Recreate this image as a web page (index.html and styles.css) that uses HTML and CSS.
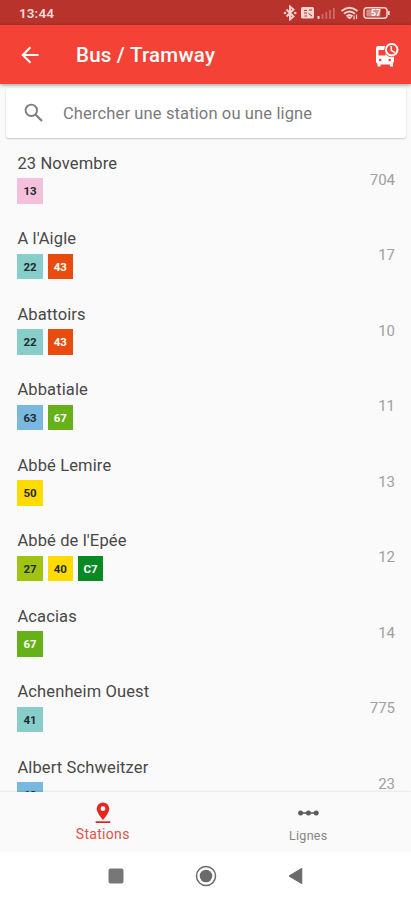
FILE: index.html
```html
<!DOCTYPE html>
<html lang="fr">
<head>
<meta charset="utf-8">
<meta name="viewport" content="width=device-width, initial-scale=1">
<title>Bus / Tramway</title>
<link rel="stylesheet" href="styles.css">
</head>
<body>
<div class="app">
  <div class="status">
    <span class="time">13:44</span>
    <svg class="status-icons" width="110" height="16" viewBox="0 0 110 16" fill="none" stroke="#f3d5d3">
      <path d="M3.500 4.500l7 7L7 14.500V1.500l3.500 3-7 7" stroke-width="1.900"/>
      <circle cx="2" cy="8" r="1.300" fill="#f3d5d3" stroke="none"/><circle cx="12.200" cy="8" r="1.300" fill="#f3d5d3" stroke="none"/>
      <rect x="18" y="2" width="13" height="11.500" rx="1.500" fill="#f3d5d3" stroke="none"/>
      <path d="M21 5.500h3M21 8h3M26 5h3M21.500 11h2.500M25.500 8.500l3.500 2.500" stroke="#b7332b" stroke-width="1"/>
      <path d="M35.500 11v3" stroke-width="2"/>
      <path d="M39.500 9v5M43.300 7v7M47 5v9M50.800 3v11" stroke="#cd7069" stroke-width="1.700"/>
      <path d="M58.500 6q8-6.500 16 0M61 8.800q5.500-4.500 11 0M63.500 11.300q3-2.500 6 0" stroke-width="2"/>
      <path d="M66.500 14l-2-2h4z" fill="#f3d5d3"/><path d="M71 10.500v4M73.500 9.500v4.500" stroke-width="1.200"/>
      <rect x="81" y="2.700" width="23" height="10.600" rx="3" stroke-width="1.500"/>
      <rect x="83.300" y="4.500" width="14" height="7" rx="1" fill="#d98c86" stroke="none"/>
      <path d="M105.800 6v4" stroke-width="1.800"/>
      <text x="88" y="11.300" class="battery">57</text>
    </svg>
  </div>
  <header class="bar">
    <svg class="back" width="18" height="18" viewBox="0 0 18 18" fill="none" stroke="#fff" stroke-width="2"><path d="M17.500 9H2M9.500 1.200L1.700 9l7.800 7.800"/></svg>
    <h1>Bus / Tramway</h1>
    <svg class="bus" width="26" height="26" viewBox="0 0 26 26">
      <path fill="#fff" d="M5 4h13v10h3v5.500l-1 1.500v3.500h-3V22.500H7.500v2H4.500V22L3 20V7q0-3 2-3z"/>
      <path fill="#f44336" d="M5.500 8h7v5.500h-7z"/>
      <circle cx="7.200" cy="18" r="1.300" fill="#f44336"/><circle cx="16.700" cy="18" r="1.300" fill="#f44336"/>
      <circle cx="18.700" cy="7.700" r="7.500" fill="#f44336"/>
      <circle cx="18.700" cy="7.700" r="5.800" fill="#f44336" stroke="#fff" stroke-width="2"/>
      <path d="M18.300 3.900v4.500l3.500 2.200" fill="none" stroke="#fff" stroke-width="1.500"/>
    </svg>
  </header>
  <div class="search">
    <svg width="20" height="20" viewBox="0 0 20 20" fill="none" stroke="#7d7d7d" stroke-width="1.900"><circle cx="7.300" cy="7.300" r="5.700"/><path d="M11.700 11.700l6.300 6.300" stroke-width="2.200"/></svg>
    <span>Chercher une station ou une ligne</span>
  </div>
  <main class="list">
    <div class="row"><div><p>23 Novembre</p><div class="tags"><b class="pink">13</b></div></div><span>704</span></div>
    <div class="row"><div><p>A l'Aigle</p><div class="tags"><b class="teal">22</b><b class="orange">43</b></div></div><span>17</span></div>
    <div class="row"><div><p>Abattoirs</p><div class="tags"><b class="teal">22</b><b class="orange">43</b></div></div><span>10</span></div>
    <div class="row"><div><p>Abbatiale</p><div class="tags"><b class="blue">63</b><b class="green">67</b></div></div><span>11</span></div>
    <div class="row"><div><p>Abbé Lemire</p><div class="tags"><b class="yellow">50</b></div></div><span>13</span></div>
    <div class="row"><div><p>Abbé de l'Epée</p><div class="tags"><b class="lime">27</b><b class="yellow">40</b><b class="dark">C7</b></div></div><span>12</span></div>
    <div class="row"><div><p>Acacias</p><div class="tags"><b class="green">67</b></div></div><span>14</span></div>
    <div class="row"><div><p>Achenheim Ouest</p><div class="tags"><b class="teal">41</b></div></div><span>775</span></div>
    <div class="row"><div><p>Albert Schweitzer</p><div class="tags"><b class="blue">63</b></div></div><span>23</span></div>
  </main>
  <nav class="tabs">
    <div class="tab active">
      <svg width="16" height="22" viewBox="0 0 16 22"><path fill="#e5281f" fill-rule="evenodd" d="M8 .5a6.300 6.300 0 0 1 6.300 6.300C14.300 11 8 18 8 18S1.700 11 1.700 6.800A6.300 6.300 0 0 1 8 .5zM8 4.300a2.400 2.400 0 1 0 0 4.800 2.400 2.400 0 0 0 0-4.800zM.7 19.300h14.600v1.700H.7z"/></svg>
      <span>Stations</span>
    </div>
    <div class="tab">
      <svg width="22" height="22" viewBox="0 0 22 22" fill="#5c5c5c"><path d="M3 10.200h16v1.600H3z"/><circle cx="3.600" cy="11" r="2.500"/><circle cx="11.400" cy="11" r="2.500"/><circle cx="19.200" cy="11" r="2.500"/></svg>
      <span>Lignes</span>
    </div>
  </nav>
  <div class="system">
    <svg width="16" height="16" viewBox="0 0 16 16"><rect x=".5" y=".5" width="15" height="15" rx="2" fill="#777"/></svg>
    <svg width="22" height="22" viewBox="0 0 22 22"><circle cx="11" cy="11" r="9.500" fill="none" stroke="#6b6b6b" stroke-width="1.500"/><circle cx="11" cy="11" r="6.300" fill="#6b6b6b"/></svg>
    <svg width="16" height="18" viewBox="0 0 16 18"><path d="M13.800 1.300v15.400L1 9z" fill="#6b6b6b" stroke="#6b6b6b" stroke-linejoin="round"/></svg>
  </div>
</div>
</body>
</html>
```
FILE: styles.css
```css
* { box-sizing: border-box; }
body { margin: 0; font-family: Roboto, "Liberation Sans", sans-serif; background: #fafafa; }
h1, p { margin: 0; }
svg { display: block; flex: none; }
.app { width: 411px; height: 900px; display: flex; flex-direction: column; overflow: hidden; }
.status { flex: none; height: 25px; background: #b7332b; display: flex; align-items: center; justify-content: space-between; padding: 0 18px 0 19px; }
.time { color: #f5dddb; font-size: 13.500px; font-weight: 600; letter-spacing: .1px; }
.battery { font-size: 8.500px; font-weight: 700; fill: #fff; stroke: none; }
.bar { flex: none; height: 59px; background: #f44336; display: flex; align-items: center; padding: 0 12px 0 21px; color: #fff; box-shadow: 0 1px 4px rgba(0,0,0,.4); z-index: 1; }
.bar h1 { flex: 1; margin-left: 37px; font-size: 20.500px; font-weight: 500; letter-spacing: .22px; line-height: 24px; padding-top: 1px; }
.search { flex: none; height: 50px; margin: 4px 5px 5px 6px; background: #fff; border-radius: 3px; box-shadow: 0 1px 2px rgba(0,0,0,.2); display: flex; align-items: center; padding-left: 18px; gap: 19px; color: #7a7a7a; font-size: 16.500px; letter-spacing: .13px; }
.list { flex: 1; min-height: 0; overflow: hidden; }
.row { height: 75.5px; display: flex; justify-content: space-between; padding: 10.8px 16px 0 17.4px; }
.row p { font-size: 16.500px; line-height: 20px; letter-spacing: .13px; color: #484848; white-space: nowrap; }
.row span { align-self: flex-start; margin-top: 16.2px; font-size: 15px; line-height: 20px; color: #a0a0a0; }
.tags { display: flex; gap: 5px; margin-top: 4.7px; }
.tags b { width: 25.3px; height: 25.5px; display: flex; align-items: center; justify-content: center; font-size: 11.500px; font-weight: 700; color: #252b2b; }
.tags .pink { background: #f5c0dc; }
.tags .teal { background: #87cecb; }
.tags .blue { background: #79b8df; }
.tags .lime { background: #a1c312; }
.tags .yellow { background: #ffdb00; }
.tags .orange { background: #e84b0e; color: #fff; }
.tags .green { background: #65b117; color: #fff; }
.tags .dark { background: #078924; color: #fff; }
.tabs { flex: none; height: 60px; display: grid; grid-template-columns: 1fr 1fr; background: #fafafa; box-shadow: 0 -1px 2px rgba(0,0,0,.08); z-index: 1; }
.tab { display: flex; flex-direction: column; align-items: center; padding-top: 10px; color: #858585; font-size: 12.500px; line-height: 18px; letter-spacing: .3px; }
.tab span { margin-top: 3px; }
.tab.active { color: #dc524b; font-size: 14px; }
.tab.active span { margin-top: 1px; }
.system { flex: none; height: 48px; background: #fff; display: flex; align-items: center; padding-left: 108px; gap: 71px; }
```
